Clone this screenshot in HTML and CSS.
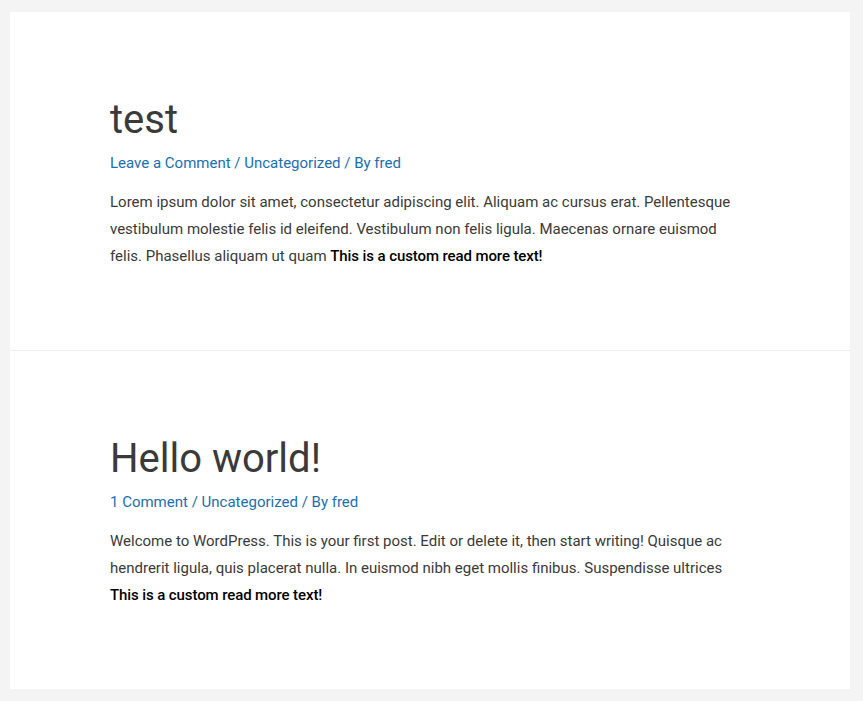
FILE: index.html
```html
<!DOCTYPE html>
<html lang="en">
<head>
<meta charset="utf-8">
<title>Blog</title>
<link rel="stylesheet" href="styles.css">
</head>
<body>
<main class="container">
  <article class="post">
    <h2 class="post-title">test</h2>
    <div class="post-meta"><a href="#">Leave a Comment</a> / <a href="#">Uncategorized</a> / By <a href="#">fred</a></div>
    <p class="post-excerpt">Lorem ipsum dolor sit amet, consectetur adipiscing elit. Aliquam ac cursus erat. Pellentesque vestibulum molestie felis id eleifend. Vestibulum non felis ligula. Maecenas ornare euismod felis. Phasellus aliquam ut quam <a class="read-more" href="#">This is a custom read more text!</a></p>
  </article>
  <article class="post">
    <h2 class="post-title">Hello world!</h2>
    <div class="post-meta"><a href="#">1 Comment</a> / <a href="#">Uncategorized</a> / By <a href="#">fred</a></div>
    <p class="post-excerpt">Welcome to WordPress. This is your first post. Edit or delete it, then start writing! Quisque ac hendrerit ligula, quis placerat nulla. In euismod nibh eget mollis finibus. Suspendisse ultrices <a class="read-more block" href="#">This is a custom read more text!</a></p>
  </article>
</main>
</body>
</html>
```
FILE: styles.css
```css
html, body {
  margin: 0;
  padding: 0;
}
body {
  background: #f4f4f4;
  font-family: Roboto, "Liberation Sans", sans-serif;
  color: #3a3a3a;
  font-size: 15px;
  line-height: 27px;
}
.container {
  margin: 12px 13px 12px 10px;
  background: #fff;
}
.post {
  padding: 82px 100px 80px 100px;
  height: 176px;
}
.post + .post {
  border-top: 1px solid #eeeeee;
}
.post-title {
  margin: 0;
  font-size: 40px;
  font-weight: 400;
  line-height: 52px;
  color: #3a3a3a;
}
.post-meta {
  margin-top: 4px;
  color: #1a6fb0;
}
.post-meta a {
  color: #1a6fb0;
  text-decoration: none;
}
.post-excerpt {
  margin: 12px 0 0;
  width: 640px;
}
.read-more {
  color: #000;
  font-weight: 500;
  letter-spacing: -0.1px;
  text-decoration: none;
}
.read-more.block {
  display: block;
}
```
